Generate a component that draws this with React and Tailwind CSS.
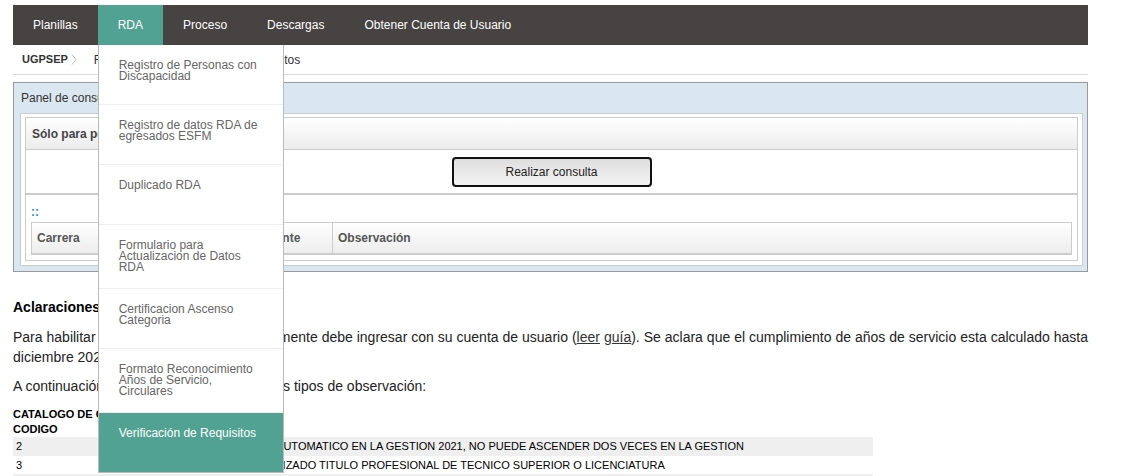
import React from "react";

const MENU = [
    { label: "Registro de Personas con Discapacidad" },
    { label: "Registro de datos RDA de egresados ESFM" },
    { label: "Duplicado RDA" },
    { label: "Formulario para Actualizacion de Datos RDA" },
    { label: "Certificacion Ascenso Categoria" },
    { label: "Formato Reconocimiento Años de Servicio, Circulares" },
    { label: "Verificación de Requisitos", active: true },
];

const NAV = ["Planillas", "RDA", "Proceso", "Descargas", "Obtener Cuenta de Usuario"];

const CATALOGO = [
    ["2", "TIENE ASCENSO AUTOMATICO EN LA GESTION 2021, NO PUEDE ASCENDER DOS VECES EN LA GESTION"],
    ["3", "NO TIENE ACTUALIZADO TITULO PROFESIONAL DE TECNICO SUPERIOR O LICENCIATURA"],
    ["4", "NO CUMPLE CON LOS AÑOS DE SERVICIO REQUERIDOS"],
];

function Chevron() {
    return (
        <svg width="6" height="11" viewBox="0 0 6 11" className="shrink-0">
            <polyline points="1,0.5 5,5.5 1,10.5" fill="none" stroke="#bdbdbd" strokeWidth="1" />
        </svg>
    );
}

function Dropdown() {
    return (
        <div className="absolute left-0 top-full z-20 w-[186px] border border-t-0 border-[#bbbbbb] bg-white">
            {MENU.map((m, i) => (
                <div
                    key={i}
                    className={
                        m.active
                            ? "bg-[#52a293] py-[15px] pl-[20px] pr-[20px]"
                            : "border-b border-[#eeeeee] py-[15px] pl-[20px] pr-[20px]"
                    }
                >
                    <div
                        className={
                            m.active
                                ? "min-h-[29px] text-[12px] leading-[11px] text-white"
                                : "min-h-[29px] text-[12px] leading-[11px] text-[#666666]"
                        }
                    >
                        {m.label}
                    </div>
                </div>
            ))}
        </div>
    );
}

export default function App() {
    return (
        <div className="min-h-screen bg-white font-['Liberation_Sans',Arial,sans-serif] text-[#222222]">
            <div className="ml-[13px] w-[1075px] pt-[5px]">
                {/* barra de navegación */}
                <ul className="flex h-[40px] bg-[#474342] text-[12px] text-white">
                    {NAV.map((n) => (
                        <li
                            key={n}
                            className={
                                n === "RDA"
                                    ? "relative flex h-full items-center bg-[#52a293] px-5"
                                    : "relative flex h-full items-center px-5"
                            }
                        >
                            {n}
                            {n === "RDA" ? <Dropdown /> : null}
                        </li>
                    ))}
                </ul>

                {/* migas */}
                <div className="flex h-[30px] items-center border-b border-[#dddddd] pl-[9px] text-[#333333]">
                    <span className="text-[11px] font-bold">UGPSEP</span>
                    <span className="ml-[3px]">
                        <Chevron />
                    </span>
                    <span className="ml-[17px] text-[12px]">RDA</span>
                    <span className="ml-[3px]">
                        <Chevron />
                    </span>
                    <span className="ml-[16px] text-[12px]">Verificación de los Requisitos</span>
                </div>

                {/* panel */}
                <div className="mt-[7px] border border-[#999999] bg-[#dae6f0]">
                    <div className="flex h-[30px] items-center pl-[7px] text-[12px] text-[#333333]">
                        Panel de consulta
                    </div>
                    <div className="mb-[5px] ml-[6px] mr-[4px] border border-[#cccccc] bg-white px-[4px] pb-[4px] pt-[3px]">
                        <div className="border border-[#cccccc]">
                            <div className="flex h-[32px] items-center border-b border-[#cccccc] bg-linear-to-b from-white to-[#ececec] pl-[6px] text-[12px] font-bold text-[#444444]">
                                Sólo para personal del magisterio
                            </div>
                            <div className="flex h-[45px] justify-center border-b-2 border-[#cccccc] pt-[7px]">
                                <button className="h-[30px] w-[200px] rounded-[4px] border-2 border-[#111111] bg-linear-to-b from-[#dedede] to-[#f4f4f4] text-[12px] text-[#222222]">
                                    Realizar consulta
                                </button>
                            </div>
                            <div className="px-[5px] pb-[5px] pt-[8px]">
                                <div className="h-[19px] text-[12px] font-bold leading-[19px] text-[#1e88d0]">::</div>
                                <div className="flex h-[33px] border border-b-2 border-[#cccccc] bg-linear-to-b from-white to-[#ededed] text-[12px] font-bold text-[#555555]">
                                    <div className="flex w-[214px] items-center pl-[5px]">Carrera</div>
                                    <div className="flex w-[86px] items-center border-l border-[#cccccc] pl-[6px]">Docente</div>
                                    <div className="flex flex-1 items-center border-l border-[#cccccc] pl-[5px]">Observación</div>
                                </div>
                            </div>
                        </div>
                    </div>
                </div>

                {/* aclaraciones */}
                <div className="mt-[25px] text-[14px] font-bold leading-[20px] text-black">Aclaraciones</div>
                <p className="mt-[10px] text-justify text-[14px] leading-[20px]">
                    Para habilitar la consulta de registro previamente debe ingresar con su cuenta de usuario (
                    <a className="text-[#333333] underline">leer</a> <a className="text-[#333333] underline">guía</a>). Se
                    aclara que el cumplimiento de años de servicio esta calculado hasta diciembre 2021.
                </p>
                <p className="mt-[9px] text-[14px] leading-[20px]">
                    A continuación se muestra el catálogo de los tipos de observación:
                </p>

                <div className="mt-[11px] text-[11px] font-bold leading-[14px] text-black">CATALOGO DE OBSERVACIONES</div>
                <div className="w-[860px] text-[11px] text-black">
                    <div className="grid h-[16px] grid-cols-[169px_1fr] items-center font-bold">
                        <div>CODIGO</div>
                        <div className="pl-[3px]">DESCRIPCION</div>
                    </div>
                    {CATALOGO.map((r, i) => (
                        <div
                            key={r[0]}
                            className={
                                i % 2 === 0
                                    ? "grid h-[18.5px] grid-cols-[169px_1fr] items-center bg-[#efefef]"
                                    : "grid h-[18.5px] grid-cols-[169px_1fr] items-center bg-white"
                            }
                        >
                            <div className="pl-[3px]">{r[0]}</div>
                            <div className="pl-[3px]">{r[1]}</div>
                        </div>
                    ))}
                </div>
            </div>
        </div>
    );
}
